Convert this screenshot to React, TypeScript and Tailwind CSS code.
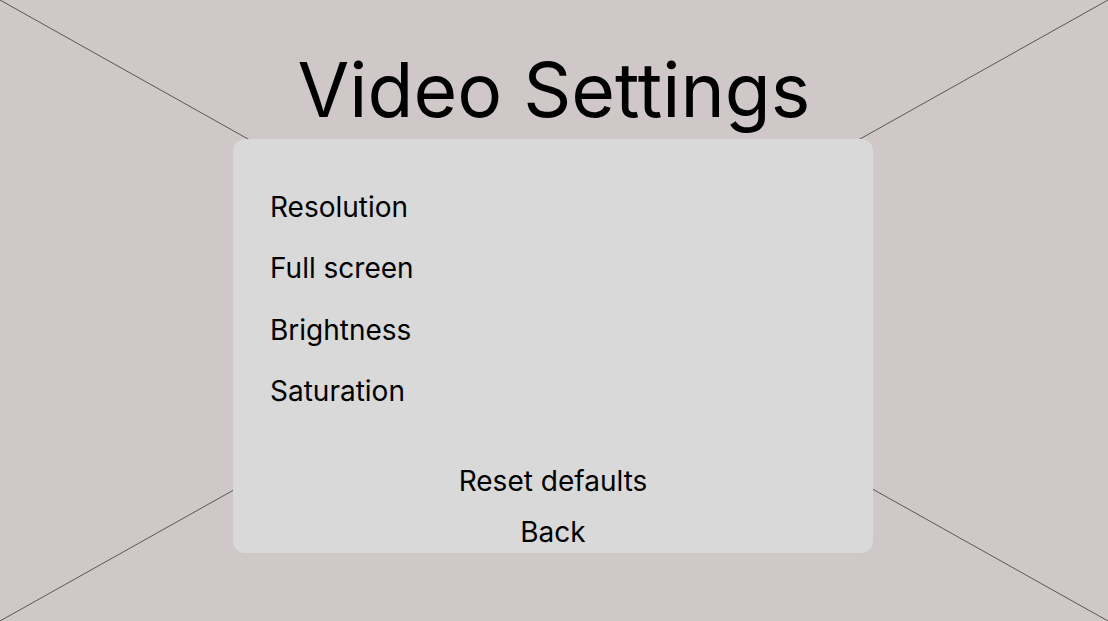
import React from "react";

const options = ["Resolution", "Full screen", "Brightness", "Saturation"];

const App: React.FC = () => {
  return (
    <div
      className="relative w-[1108px] h-[621px] overflow-hidden bg-[#d0c7c8] text-black"
      style={{ fontFamily: "Inter, 'Liberation Sans', sans-serif" }}
    >
      {/* wireframe cross behind the content */}
      <svg
        className="absolute inset-0"
        width="1108"
        height="621"
        viewBox="0 0 1108 621"
      >
        <line x1="0" y1="0" x2="1108" y2="621" stroke="#3a3a3a" strokeWidth="0.8" />
        <line x1="1108" y1="0" x2="0" y2="621" stroke="#3a3a3a" strokeWidth="0.8" />
      </svg>

      <div className="relative flex flex-col items-center">
        <h1 className="mt-[52px] text-[75px] leading-none font-normal">
          Video Settings
        </h1>

        <div className="mt-[12px] mr-[2px] w-[640px] h-[414px] rounded-[12px] bg-[#d9d9d9] flex flex-col pt-[38px]">
          <ul className="pl-[37px]">
            {options.map((opt) => (
              <li key={opt} className="text-[28px] leading-[61.4px]">
                {opt}
              </li>
            ))}
          </ul>

          <div className="mt-[33px] flex flex-col items-center">
            <button className="text-[28px] leading-[50px]">Reset defaults</button>
            <button className="text-[28px] leading-[52px]">Back</button>
          </div>
        </div>
      </div>
    </div>
  );
};

export default App;
